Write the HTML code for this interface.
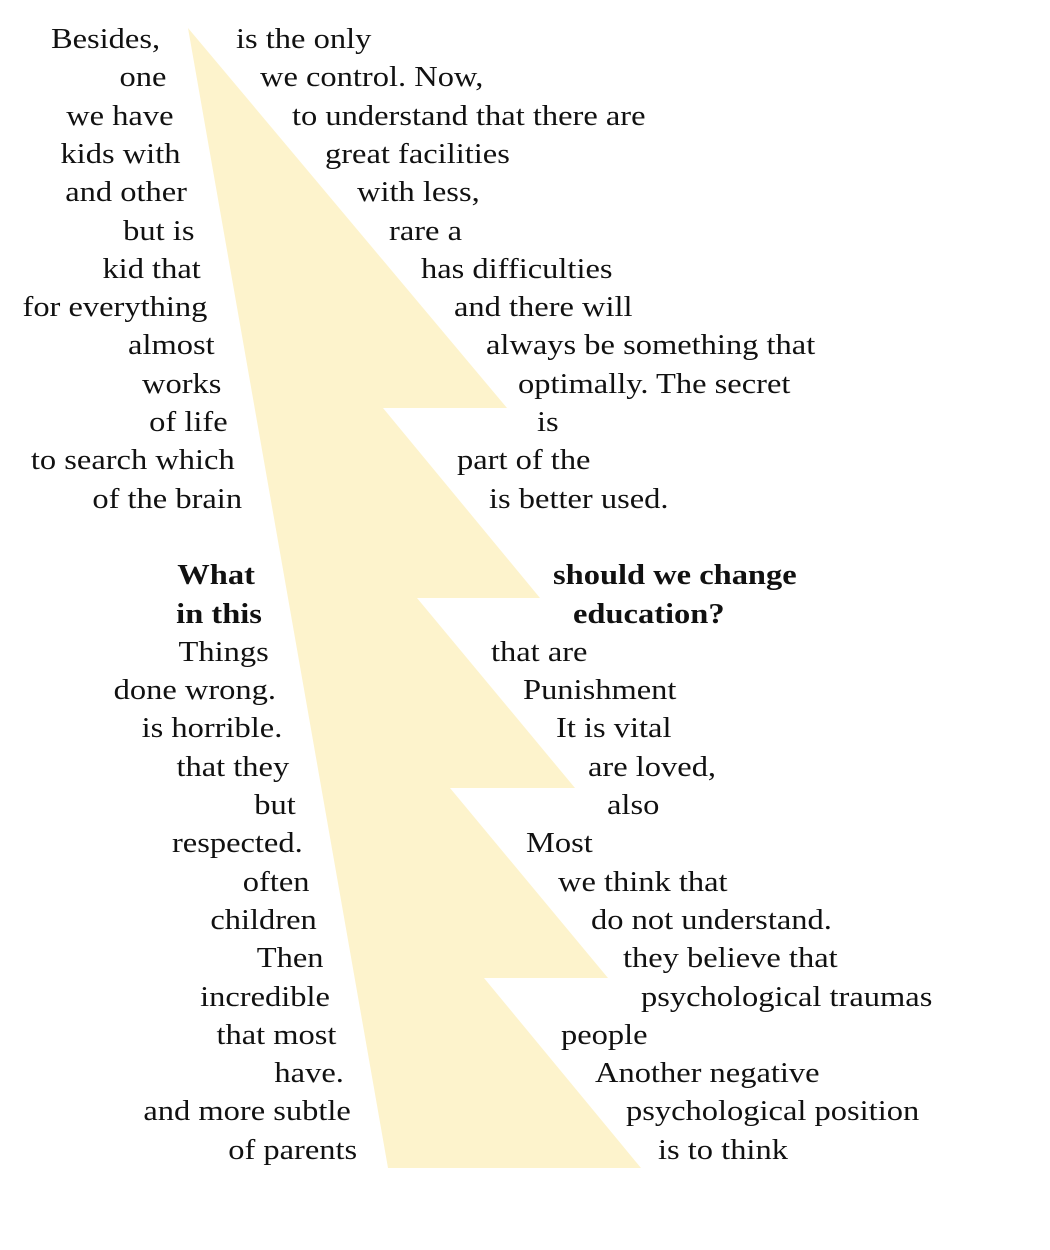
<!DOCTYPE html>
<html><head><meta charset="utf-8"><style>
html,body{margin:0;padding:0;background:#fff;width:1050px;height:1250px;overflow:hidden}
body{position:relative;font-family:"Liberation Serif",serif;font-size:28px;color:#111}
.l,.r{position:absolute;white-space:nowrap;line-height:38px}
.l{text-align:right;transform:scaleX(1.16);transform-origin:right center}
.r{transform:scaleX(1.16);transform-origin:left center}
b{font-weight:bold}
svg{position:absolute;left:0;top:0}
</style></head><body>
<svg width="1050" height="1250"><polygon fill="#fdf3cc" points="188,28 507,408 383,408 540,598 417,598 575,788 450,788 608,978 484,978 641,1168 388,1168"/></svg>
<div id="c"></div>
<script>
var L=[["Besides,","is the only",236],["one","we control. Now,",260],["we have","to understand that there are",292],["kids with","great facilities",325],["and other","with less,",357],["but is","rare a",389],["kid that","has difficulties",421],["for everything","and there will",454],["almost","always be something that",486],["works","optimally. The secret",518],["of life","is",537],["to search which","part of the",457],["of the brain","is better used.",489],null,["<b>What</b>","<b>should we change</b>",553],["<b>in this</b>","<b>education?</b>",573],["Things","that are",491],["done wrong.","Punishment",523],["is horrible.","It is vital",556],["that they","are loved,",588],["but","also",607],["respected.","Most",526],["often","we think that",558],["children","do not understand.",591],["Then","they believe that",623],["incredible","psychological traumas",641],["that most","people",561],["have.","Another negative",595],["and more subtle","psychological position",626],["of parents","is to think",658]];
var h="";
for(var i=0;i<L.length;i++){if(!L[i])continue;var t=21+i*38.3;var re=160+6.8*i;
h+='<div class="l" style="top:'+t+'px;right:'+(1050-re)+'px">'+L[i][0]+'</div>';
h+='<div class="r" style="top:'+t+'px;left:'+L[i][2]+'px">'+L[i][1]+'</div>';}
document.getElementById("c").innerHTML=h;
</script>
</body></html>
